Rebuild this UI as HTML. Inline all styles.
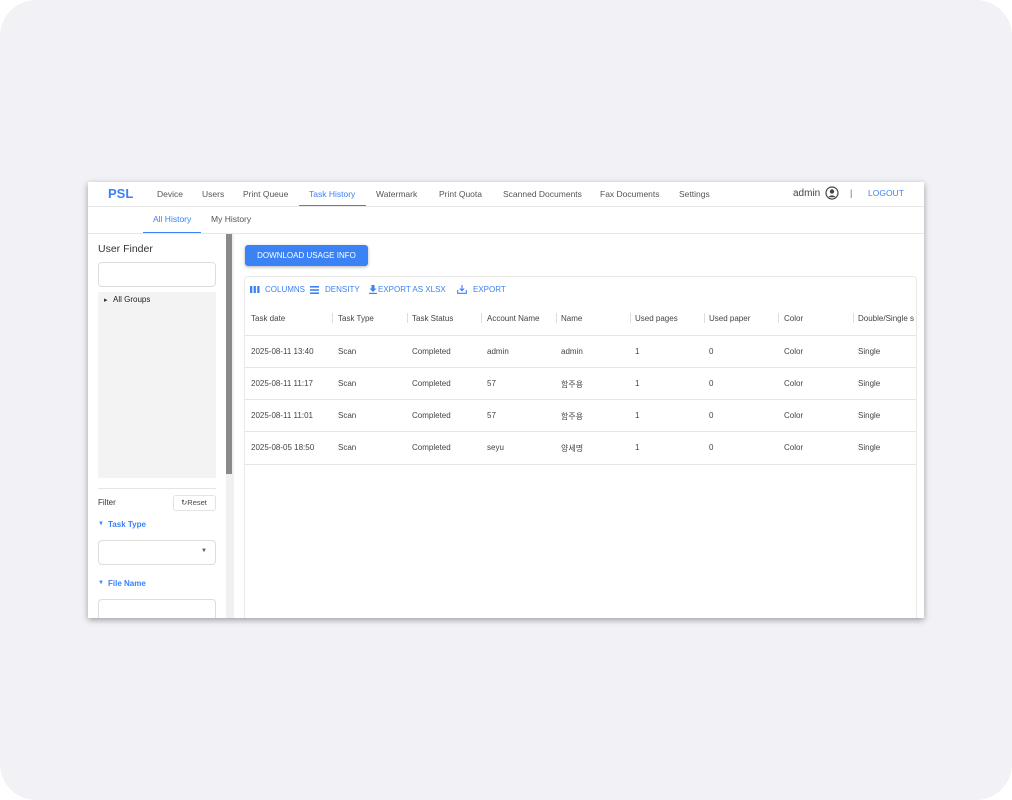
<!DOCTYPE html>
<html><head><style>
*{box-sizing:border-box;margin:0;padding:0}
body{width:1012px;height:800px;background:#fff;font-family:"Liberation Sans","Noto Sans CJK KR",sans-serif;position:relative;overflow:hidden}
.outer{position:absolute;left:0;top:0;width:1012px;height:800px;background:#f1f1f6;border-radius:36px}
.win{position:absolute;left:88px;top:182px;width:836px;height:436px;background:#fff;box-shadow:0 2px 6px rgba(0,0,0,.35);overflow:hidden}
.a{position:absolute;white-space:nowrap}
.nav{font-size:8.5px;color:#555;top:7px}
.blue{color:#3b82f6}
.hdr{font-size:8px;color:#444;top:132px}
.cell{font-size:8px;color:#444}
.sep{position:absolute;width:1px;height:10px;background:#ddd;top:131px}
.row{position:absolute;left:157px;width:671px;height:1px;background:#e5e5e5}
</style></head><body>
<div class="outer"></div>
<div class="win">
<div class="a" style="left:20px;top:4px;font-size:13px;font-weight:bold;color:#3b82f6">PSL</div>
<div class="a nav" style="left:69px">Device</div>
<div class="a nav" style="left:114px">Users</div>
<div class="a nav" style="left:155px">Print Queue</div>
<div class="a nav blue" style="left:221px">Task History</div>
<div style="position:absolute;left:211px;top:23px;width:67px;height:1px;background:#3b82f6"></div>
<div class="a nav" style="left:288px">Watermark</div>
<div class="a nav" style="left:351px">Print Quota</div>
<div class="a nav" style="left:415px">Scanned Documents</div>
<div class="a nav" style="left:512px">Fax Documents</div>
<div class="a nav" style="left:591px">Settings</div>
<div class="a" style="left:705px;top:6px;font-size:10px;color:#444">admin</div>
<svg class="a" style="left:737px;top:4px" width="14" height="14" viewBox="0 0 14 14"><circle cx="7" cy="7" r="6" fill="none" stroke="#444" stroke-width="1.2"/><circle cx="7" cy="5.5" r="2.2" fill="#444"/><path d="M3 11.3Q7 7.5 11 11.3" fill="#444"/></svg>
<div class="a" style="left:762px;top:6px;font-size:9px;color:#666">|</div>
<div class="a blue" style="left:780px;top:6px;font-size:8.5px">LOGOUT</div>
<div style="position:absolute;left:0;top:24px;width:836px;height:1px;background:#e8e8e8"></div>
<div class="a blue" style="left:65px;top:32px;font-size:8.5px">All History</div>
<div style="position:absolute;left:55px;top:50px;width:58px;height:2px;background:#3b82f6"></div>
<div class="a" style="left:123px;top:32px;font-size:8.5px;color:#555">My History</div>
<div style="position:absolute;left:0;top:51px;width:836px;height:1px;background:#e8e8e8"></div>
<div class="a" style="left:10px;top:61px;font-size:10.5px;color:#333">User Finder</div>
<div style="position:absolute;left:10px;top:80px;width:118px;height:25px;border:1px solid #ddd;border-radius:4px"></div>
<div style="position:absolute;left:10px;top:110px;width:118px;height:186px;background:#f3f3f3"></div>
<div class="a" style="left:16px;top:114px;font-size:7px;color:#333">▸</div>
<div class="a" style="left:25px;top:113px;font-size:8px;color:#222">All Groups</div>
<div style="position:absolute;left:10px;top:306px;width:118px;height:1px;background:#e5e5e5"></div>
<div class="a" style="left:10px;top:316px;font-size:8px;color:#333">Filter</div>
<div style="position:absolute;left:85px;top:313px;width:43px;height:16px;border:1px solid #e3e3e3;border-radius:3px"></div>
<div class="a" style="left:93px;top:316px;font-size:7.5px;color:#444">↻Reset</div>
<div class="a" style="left:10px;top:339px;font-size:6px;color:#3b82f6">▼</div>
<div class="a blue" style="left:20px;top:338px;font-size:8px;font-weight:bold">Task Type</div>
<div style="position:absolute;left:10px;top:358px;width:118px;height:25px;border:1px solid #ddd;border-radius:4px"></div>
<div class="a" style="left:113px;top:366px;font-size:6px;color:#555">▼</div>
<div class="a" style="left:10px;top:398px;font-size:6px;color:#3b82f6">▼</div>
<div class="a blue" style="left:20px;top:397px;font-size:8px;font-weight:bold">File Name</div>
<div style="position:absolute;left:10px;top:417px;width:118px;height:30px;border:1px solid #ddd;border-radius:4px"></div>
<div style="position:absolute;left:138px;top:52px;width:8px;height:384px;background:#f0f0f0"></div>
<div style="position:absolute;left:138px;top:52px;width:6px;height:240px;background:#8a8a8a"></div>
<div style="position:absolute;left:157px;top:63px;width:123px;height:21px;background:#3b82f6;border-radius:3px;box-shadow:0 1px 3px rgba(0,0,0,.3);color:#fff;font-size:8px;text-align:center;line-height:21px">DOWNLOAD USAGE INFO</div>
<div style="position:absolute;left:156px;top:94px;width:673px;height:350px;border:1px solid #e8e8e8;border-radius:4px"></div>
<svg class="a" style="left:162px;top:104px" width="10" height="8" viewBox="0 0 10 8"><rect x="0" y="0" width="2.3" height="7" fill="#3b82f6"/><rect x="3.6" y="0" width="2.3" height="7" fill="#3b82f6"/><rect x="7.2" y="0" width="2.3" height="7" fill="#3b82f6"/></svg>
<div class="a blue" style="left:177px;top:103px;font-size:8px">COLUMNS</div>
<svg class="a" style="left:222px;top:104px" width="9" height="8" viewBox="0 0 9 8"><rect y="0" width="9" height="1.6" fill="#3b82f6"/><rect y="3.2" width="9" height="1.6" fill="#3b82f6"/><rect y="6.4" width="9" height="1.6" fill="#3b82f6"/></svg>
<div class="a blue" style="left:237px;top:103px;font-size:8px">DENSITY</div>
<svg class="a" style="left:281px;top:103px" width="8" height="9" viewBox="0 0 8 9"><path d="M2.5 0h3v3.5h2L4 7 .5 3.5h2z" fill="#3b82f6"/><rect y="7.8" width="8" height="1.2" fill="#3b82f6"/></svg>
<div class="a blue" style="left:290px;top:103px;font-size:8px">EXPORT AS XLSX</div>
<svg class="a" style="left:369px;top:103px" width="10" height="9" viewBox="0 0 10 9"><path d="M5 0v5.5M2.8 3.5 5 5.7 7.2 3.5M.7 5v3.3h8.6V5" fill="none" stroke="#3b82f6" stroke-width="1.1"/></svg>
<div class="a blue" style="left:385px;top:103px;font-size:8px">EXPORT</div>
<div class="a hdr" style="left:163px">Task date</div>
<div class="a hdr" style="left:250px">Task Type</div>
<div class="a hdr" style="left:324px">Task Status</div>
<div class="a hdr" style="left:399px">Account Name</div>
<div class="a hdr" style="left:473px">Name</div>
<div class="a hdr" style="left:547px">Used pages</div>
<div class="a hdr" style="left:621px">Used paper</div>
<div class="a hdr" style="left:696px">Color</div>
<div class="a hdr" style="left:770px">Double/Single s</div>
<div class="sep" style="left:244px"></div><div class="sep" style="left:319px"></div><div class="sep" style="left:393px"></div><div class="sep" style="left:468px"></div><div class="sep" style="left:542px"></div><div class="sep" style="left:616px"></div><div class="sep" style="left:690px"></div><div class="sep" style="left:765px"></div>
<div class="row" style="top:153px"></div>
<div class="row" style="top:185px"></div>
<div class="row" style="top:217px"></div>
<div class="row" style="top:249px"></div>
<div class="row" style="top:282px"></div>
<div class="a cell" style="left:163px;top:165px">2025-08-11 13:40</div><div class="a cell" style="left:250px;top:165px">Scan</div><div class="a cell" style="left:324px;top:165px">Completed</div><div class="a cell" style="left:399px;top:165px">admin</div><div class="a cell" style="left:473px;top:165px">admin</div><div class="a cell" style="left:547px;top:165px">1</div><div class="a cell" style="left:621px;top:165px">0</div><div class="a cell" style="left:696px;top:165px">Color</div><div class="a cell" style="left:770px;top:165px">Single</div>
<div class="a cell" style="left:163px;top:197px">2025-08-11 11:17</div><div class="a cell" style="left:250px;top:197px">Scan</div><div class="a cell" style="left:324px;top:197px">Completed</div><div class="a cell" style="left:399px;top:197px">57</div><div class="a cell" style="left:473px;top:197px">함주용</div><div class="a cell" style="left:547px;top:197px">1</div><div class="a cell" style="left:621px;top:197px">0</div><div class="a cell" style="left:696px;top:197px">Color</div><div class="a cell" style="left:770px;top:197px">Single</div>
<div class="a cell" style="left:163px;top:229px">2025-08-11 11:01</div><div class="a cell" style="left:250px;top:229px">Scan</div><div class="a cell" style="left:324px;top:229px">Completed</div><div class="a cell" style="left:399px;top:229px">57</div><div class="a cell" style="left:473px;top:229px">함주용</div><div class="a cell" style="left:547px;top:229px">1</div><div class="a cell" style="left:621px;top:229px">0</div><div class="a cell" style="left:696px;top:229px">Color</div><div class="a cell" style="left:770px;top:229px">Single</div>
<div class="a cell" style="left:163px;top:261px">2025-08-05 18:50</div><div class="a cell" style="left:250px;top:261px">Scan</div><div class="a cell" style="left:324px;top:261px">Completed</div><div class="a cell" style="left:399px;top:261px">seyu</div><div class="a cell" style="left:473px;top:261px">양세명</div><div class="a cell" style="left:547px;top:261px">1</div><div class="a cell" style="left:621px;top:261px">0</div><div class="a cell" style="left:696px;top:261px">Color</div><div class="a cell" style="left:770px;top:261px">Single</div>
</div>
</body></html>
